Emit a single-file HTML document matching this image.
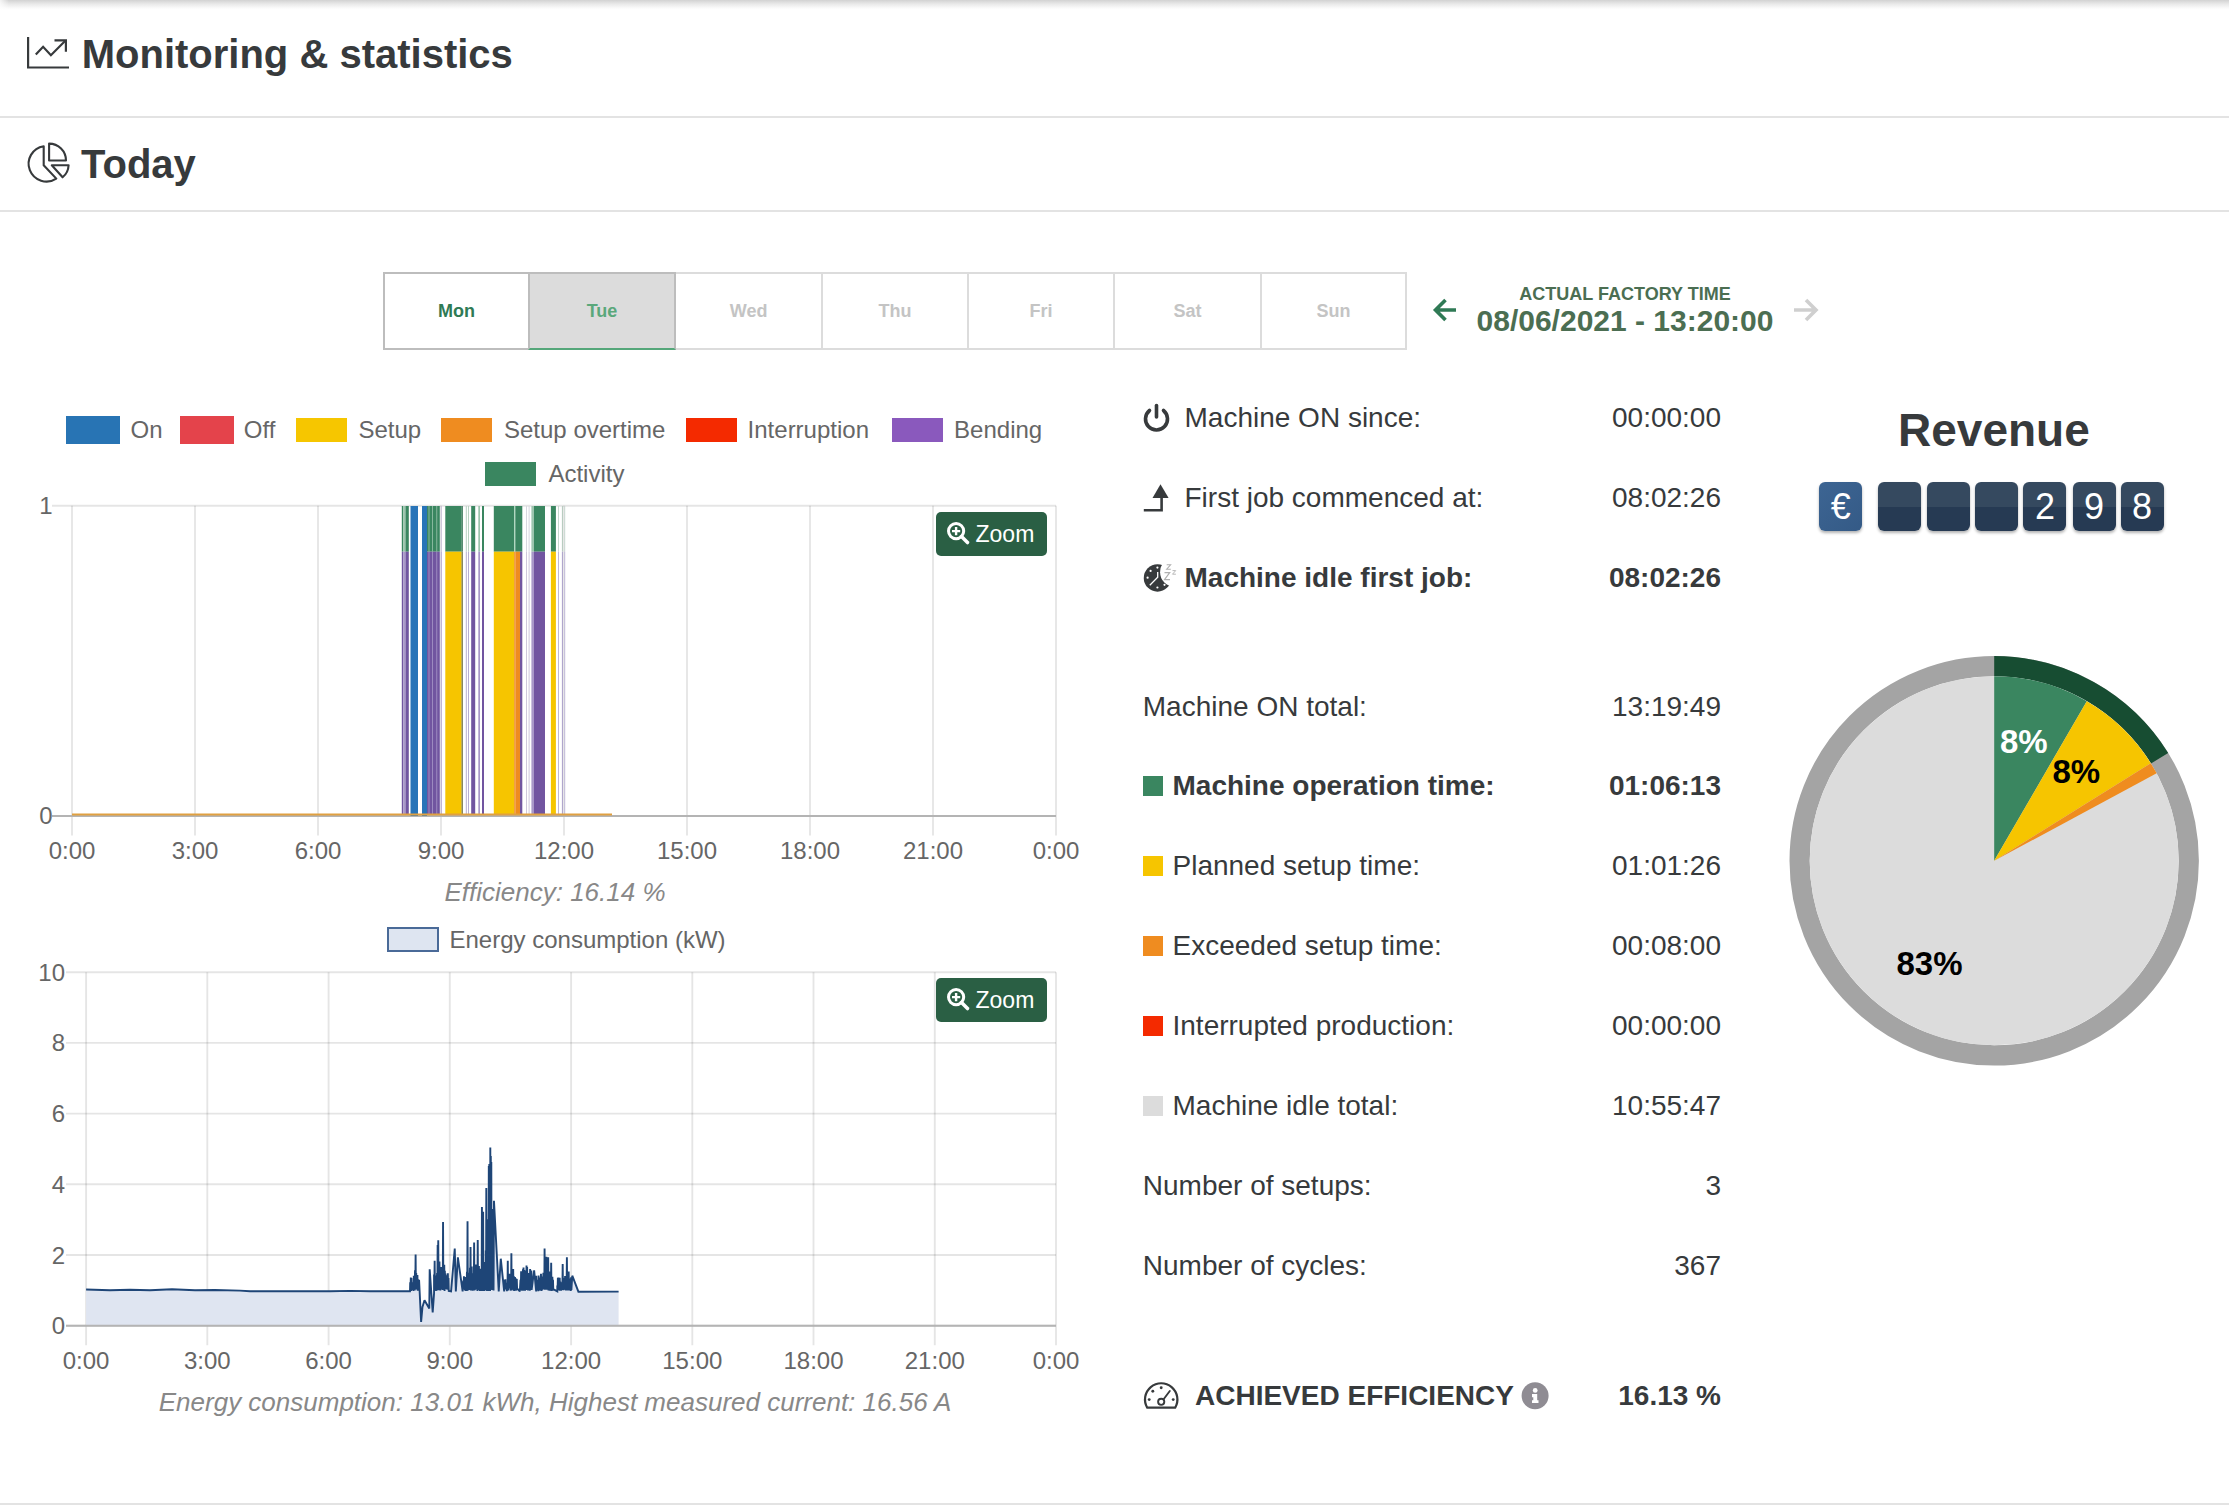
<!DOCTYPE html>
<html><head><meta charset="utf-8">
<style>
html,body{margin:0;padding:0;background:#fff;}
body{width:2229px;height:1505px;position:relative;overflow:hidden;font-family:"Liberation Sans",sans-serif;color:#373a3c;}
.t{position:absolute;line-height:1;white-space:nowrap;}
.b{font-weight:bold;}
.shadow{position:absolute;left:0;top:0;width:2229px;height:10px;background:linear-gradient(to right,rgba(255,255,255,.75),rgba(255,255,255,0) 9px),linear-gradient(#d2d2d2,#e9e9e9 40%,#fafafa 80%,#fff);}
.hr{position:absolute;left:0;width:2229px;height:2px;background:#e3e3e3;}
.tab{position:absolute;top:272px;height:77.5px;box-sizing:border-box;border:2px solid #dcdcdc;font-weight:bold;font-size:18px;text-align:center;line-height:74px;color:#c4c4c4;}
.sq{position:absolute;width:20px;height:20px;}
.digit{position:absolute;top:482px;width:43px;height:49px;border-radius:6px;background:linear-gradient(#35495f 0,#35495f 51%,#263a53 51%,#263a53 100%);box-shadow:0 2px 3px rgba(0,0,0,.3);color:#fff;font-size:36px;text-align:center;line-height:50px;}
.zoom{position:absolute;left:936px;width:111px;height:44px;border-radius:5px;background:#2a5f44;}
svg{position:absolute;left:0;top:0;overflow:visible;}
</style></head>
<body>
<div class="shadow"></div>
<svg style="left:0;top:0" width="80" height="200">
 <path d="M28.1 37 V67.5 H69" fill="none" stroke="#373a3c" stroke-width="2.2"/>
 <path d="M35.8 54.5 L43.1 46.8 L50.9 55.2 L65.3 40.8" fill="none" stroke="#373a3c" stroke-width="2.2"/>
 <path d="M54.5 40.4 H65.9 V51.8" fill="none" stroke="#373a3c" stroke-width="2.2"/>
 <path d="M43.7 146.2 A17.8 17.8 0 1 0 56.3 178.6 L43.7 165.2 Z" fill="none" stroke="#373a3c" stroke-width="2.1" stroke-linejoin="round"/>
 <path d="M49.1 143.6 A16.9 16.9 0 0 1 66 160.5 H49.1 Z" fill="none" stroke="#373a3c" stroke-width="2.1" stroke-linejoin="round"/>
 <path d="M51.8 165.2 H68.6 A16.8 16.8 0 0 1 62.6 177.3 Z" fill="none" stroke="#373a3c" stroke-width="2.1" stroke-linejoin="round"/>
</svg>
<div class="t b" style="left:81.7px;top:34.14px;font-size:40px;">Monitoring &amp; statistics</div>
<div class="hr" style="top:115.5px"></div>
<div class="t b" style="left:81.0px;top:144.14px;font-size:40px;">Today</div>
<div class="hr" style="top:209.5px"></div>
<div class="tab" style="left:383.2px;width:146.7px;border-color:#bdbdbd;color:#2f7a55;z-index:1;">Mon</div>
<div class="tab" style="left:527.9px;width:148.3px;border-color:#bdbdbd;background:#dcdcdc;color:#5aa87b;border-bottom-color:#55a77a;z-index:2;">Tue</div>
<div class="tab" style="left:674.2px;width:148.8px;">Wed</div>
<div class="tab" style="left:821.0px;width:148.0px;">Thu</div>
<div class="tab" style="left:967.0px;width:148.0px;">Fri</div>
<div class="tab" style="left:1113.0px;width:149.0px;">Sat</div>
<div class="tab" style="left:1260.0px;width:147.0px;">Sun</div>
<svg width="2229" height="400">
 <path d="M1456 310 H1437 M1445.5 300 L1435.5 310 L1445.5 320" fill="none" stroke="#2f7a55" stroke-width="3.6"/>
 <path d="M1794 310 H1814 M1806 300 L1816 310 L1806 320" fill="none" stroke="#cfcfcf" stroke-width="3.6"/>
</svg>
<div class="t b" style="left:1125.0px;width:1000px;text-align:center;top:284.56px;font-size:18px;color:#4b6e52;">ACTUAL FACTORY TIME</div>
<div class="t b" style="left:1125.0px;width:1000px;text-align:center;top:306.41px;font-size:30px;color:#4b6e52;">08/06/2021 - 13:20:00</div>
<div style="position:absolute;left:66.3px;top:415.9px;width:54.1px;height:27.8px;background:#2874b4"></div>
<div class="t " style="left:130.6px;top:417.68px;font-size:24px;color:#666;">On</div>
<div style="position:absolute;left:180.1px;top:415.9px;width:54.1px;height:27.8px;background:#e4434b"></div>
<div class="t " style="left:243.8px;top:417.68px;font-size:24px;color:#666;">Off</div>
<div style="position:absolute;left:296.3px;top:417.9px;width:50.7px;height:23.7px;background:#f6c600"></div>
<div class="t " style="left:358.4px;top:417.68px;font-size:24px;color:#666;">Setup</div>
<div style="position:absolute;left:441.4px;top:417.9px;width:50.7px;height:23.7px;background:#ef8c20"></div>
<div class="t " style="left:504.0px;top:417.68px;font-size:24px;color:#666;">Setup overtime</div>
<div style="position:absolute;left:686.3px;top:417.9px;width:50.7px;height:23.7px;background:#f42a00"></div>
<div class="t " style="left:747.6px;top:417.68px;font-size:24px;color:#666;">Interruption</div>
<div style="position:absolute;left:892.2px;top:417.9px;width:50.7px;height:23.7px;background:#8a59bd"></div>
<div class="t " style="left:954.1px;top:417.68px;font-size:24px;color:#666;">Bending</div>
<div style="position:absolute;left:485.2px;top:461.8px;width:50.8px;height:23.9px;background:#3a8660"></div>
<div class="t " style="left:548.4px;top:461.68px;font-size:24px;color:#666;">Activity</div>
<svg width="1100" height="1505"><line x1="72" y1="505.8" x2="72" y2="835.6" stroke="rgba(0,0,0,0.1)" stroke-width="1.9"/><line x1="195" y1="505.8" x2="195" y2="835.6" stroke="rgba(0,0,0,0.1)" stroke-width="1.9"/><line x1="318" y1="505.8" x2="318" y2="835.6" stroke="rgba(0,0,0,0.1)" stroke-width="1.9"/><line x1="441" y1="505.8" x2="441" y2="835.6" stroke="rgba(0,0,0,0.1)" stroke-width="1.9"/><line x1="564" y1="505.8" x2="564" y2="835.6" stroke="rgba(0,0,0,0.1)" stroke-width="1.9"/><line x1="687" y1="505.8" x2="687" y2="835.6" stroke="rgba(0,0,0,0.1)" stroke-width="1.9"/><line x1="810" y1="505.8" x2="810" y2="835.6" stroke="rgba(0,0,0,0.1)" stroke-width="1.9"/><line x1="933" y1="505.8" x2="933" y2="835.6" stroke="rgba(0,0,0,0.1)" stroke-width="1.9"/><line x1="1056" y1="505.8" x2="1056" y2="835.6" stroke="rgba(0,0,0,0.1)" stroke-width="1.9"/><line x1="52" y1="505.8" x2="1056" y2="505.8" stroke="rgba(0,0,0,0.1)" stroke-width="1.9"/><line x1="52" y1="816" x2="1056" y2="816" stroke="#b4b4b4" stroke-width="2"/><rect x="401.8" y="506" width="1.40" height="45.7" fill="#3a8660"/><rect x="401.8" y="551.7" width="1.40" height="263.3" fill="#7155a0"/><rect x="403.2" y="506" width="2.30" height="45.7" fill="#9cc4ad"/><rect x="403.2" y="551.7" width="2.30" height="263.3" fill="#a898c8"/><rect x="405.5" y="506" width="3.30" height="45.7" fill="#3a8660"/><rect x="405.5" y="551.7" width="3.30" height="263.3" fill="#7155a0"/><rect x="410.5" y="506" width="7.50" height="310" fill="#2874b8"/><rect x="422" y="506" width="5.00" height="310" fill="#2874b8"/><rect x="427" y="506" width="12.80" height="45.7" fill="#3a8660"/><rect x="427" y="551.7" width="12.80" height="263.3" fill="#7155a0"/><rect x="428.6" y="506" width="0.80" height="45.7" fill="#9cc4ad"/><rect x="428.6" y="551.7" width="0.80" height="263.3" fill="#a898c8"/><rect x="432.2" y="506" width="0.80" height="45.7" fill="#9cc4ad"/><rect x="432.2" y="551.7" width="0.80" height="263.3" fill="#a898c8"/><rect x="436.4" y="506" width="0.80" height="45.7" fill="#9cc4ad"/><rect x="436.4" y="551.7" width="0.80" height="263.3" fill="#a898c8"/><rect x="440.8" y="506" width="1.00" height="45.7" fill="#c9c0d8"/><rect x="440.8" y="551.7" width="1.00" height="263.3" fill="#b7a9cf"/><rect x="445.3" y="506" width="16.30" height="45.7" fill="#3a8660"/><rect x="445.3" y="551.7" width="16.30" height="263.3" fill="#f6c500"/><rect x="461.6" y="506" width="1.20" height="45.7" fill="#2f6f4f"/><rect x="461.6" y="551.7" width="1.20" height="263.3" fill="#6a6a3a"/><rect x="465.8" y="506" width="1.00" height="45.7" fill="#b9d2c2"/><rect x="465.8" y="551.7" width="1.00" height="263.3" fill="#b8aed0"/><rect x="468" y="506" width="1.00" height="45.7" fill="#b9d2c2"/><rect x="468" y="551.7" width="1.00" height="263.3" fill="#b8aed0"/><rect x="471.2" y="506" width="4.00" height="45.7" fill="#3a8660"/><rect x="471.2" y="551.7" width="4.00" height="263.3" fill="#7155a0"/><rect x="478.3" y="506" width="1.70" height="45.7" fill="#9cc4ad"/><rect x="478.3" y="551.7" width="1.70" height="263.3" fill="#a898c8"/><rect x="482" y="506" width="2.00" height="45.7" fill="#3a8660"/><rect x="482" y="551.7" width="2.00" height="263.3" fill="#7155a0"/><rect x="493.8" y="506" width="20.40" height="45.7" fill="#3a8660"/><rect x="493.8" y="551.7" width="20.40" height="263.3" fill="#f6c500"/><rect x="514.2" y="506" width="1.10" height="45.7" fill="#a8d4b8"/><rect x="514.2" y="551.7" width="1.10" height="263.3" fill="#ef8c1f"/><rect x="515.3" y="506" width="4.70" height="45.7" fill="#3a8660"/><rect x="515.3" y="551.7" width="4.70" height="263.3" fill="#ef8c1f"/><rect x="520" y="506" width="2.30" height="45.7" fill="#3a8660"/><rect x="520" y="551.7" width="2.30" height="263.3" fill="#7155a0"/><rect x="526" y="506" width="1.00" height="45.7" fill="#d8d8e0"/><rect x="526" y="551.7" width="1.00" height="263.3" fill="#d0c8dc"/><rect x="528.6" y="506" width="1.00" height="45.7" fill="#d8d8e0"/><rect x="528.6" y="551.7" width="1.00" height="263.3" fill="#d0c8dc"/><rect x="531.4" y="506" width="2.60" height="45.7" fill="#9cc4ad"/><rect x="531.4" y="551.7" width="2.60" height="263.3" fill="#a898c8"/><rect x="534" y="506" width="11.00" height="45.7" fill="#3a8660"/><rect x="534" y="551.7" width="11.00" height="263.3" fill="#7155a0"/><rect x="550.9" y="506" width="5.00" height="45.7" fill="#3a8660"/><rect x="550.9" y="551.7" width="5.00" height="263.3" fill="#f6c500"/><rect x="558" y="506" width="1.00" height="45.7" fill="#c8d8cf"/><rect x="558" y="551.7" width="1.00" height="263.3" fill="#c0b8d8"/><rect x="561.9" y="506" width="1.10" height="45.7" fill="#b8ccc0"/><rect x="561.9" y="551.7" width="1.10" height="263.3" fill="#b0a6cc"/><rect x="564.2" y="506" width="1.00" height="45.7" fill="#c8d8cf"/><rect x="564.2" y="551.7" width="1.00" height="263.3" fill="#c0b8d8"/><line x1="72" y1="814.5" x2="612" y2="814.5" stroke="#e0a040" stroke-width="2.2"/><text x="52.5" y="513.6" font-size="24" fill="#666" text-anchor="end">1</text><text x="52.5" y="824" font-size="24" fill="#666" text-anchor="end">0</text><text x="72" y="859" font-size="24" fill="#666" text-anchor="middle">0:00</text><text x="195" y="859" font-size="24" fill="#666" text-anchor="middle">3:00</text><text x="318" y="859" font-size="24" fill="#666" text-anchor="middle">6:00</text><text x="441" y="859" font-size="24" fill="#666" text-anchor="middle">9:00</text><text x="564" y="859" font-size="24" fill="#666" text-anchor="middle">12:00</text><text x="687" y="859" font-size="24" fill="#666" text-anchor="middle">15:00</text><text x="810" y="859" font-size="24" fill="#666" text-anchor="middle">18:00</text><text x="933" y="859" font-size="24" fill="#666" text-anchor="middle">21:00</text><text x="1056" y="859" font-size="24" fill="#666" text-anchor="middle">0:00</text></svg>
<div class="t " style="left:55.0px;width:1000px;text-align:center;top:878.99px;font-size:26px;color:#888;font-style:italic;">Efficiency: 16.14 %</div>
<div style="position:absolute;left:387.1px;top:927px;width:51.8px;height:25.4px;box-sizing:border-box;border:2px solid #4a6a98;background:#dee5f1"></div>
<div class="t " style="left:449.5px;top:927.68px;font-size:24px;color:#666;">Energy consumption (kW)</div>
<svg width="1100" height="1505"><line x1="86.1" y1="972.2" x2="86.1" y2="1345.3" stroke="rgba(0,0,0,0.1)" stroke-width="1.9"/><line x1="207.3" y1="972.2" x2="207.3" y2="1345.3" stroke="rgba(0,0,0,0.1)" stroke-width="1.9"/><line x1="328.6" y1="972.2" x2="328.6" y2="1345.3" stroke="rgba(0,0,0,0.1)" stroke-width="1.9"/><line x1="449.8" y1="972.2" x2="449.8" y2="1345.3" stroke="rgba(0,0,0,0.1)" stroke-width="1.9"/><line x1="571.1" y1="972.2" x2="571.1" y2="1345.3" stroke="rgba(0,0,0,0.1)" stroke-width="1.9"/><line x1="692.3" y1="972.2" x2="692.3" y2="1345.3" stroke="rgba(0,0,0,0.1)" stroke-width="1.9"/><line x1="813.5" y1="972.2" x2="813.5" y2="1345.3" stroke="rgba(0,0,0,0.1)" stroke-width="1.9"/><line x1="934.8" y1="972.2" x2="934.8" y2="1345.3" stroke="rgba(0,0,0,0.1)" stroke-width="1.9"/><line x1="1056.0" y1="972.2" x2="1056.0" y2="1345.3" stroke="rgba(0,0,0,0.1)" stroke-width="1.9"/><line x1="66" y1="972.2" x2="1056" y2="972.2" stroke="rgba(0,0,0,0.1)" stroke-width="1.9"/><line x1="66" y1="1042.9" x2="1056" y2="1042.9" stroke="rgba(0,0,0,0.1)" stroke-width="1.9"/><line x1="66" y1="1113.6" x2="1056" y2="1113.6" stroke="rgba(0,0,0,0.1)" stroke-width="1.9"/><line x1="66" y1="1184.3" x2="1056" y2="1184.3" stroke="rgba(0,0,0,0.1)" stroke-width="1.9"/><line x1="66" y1="1255.0" x2="1056" y2="1255.0" stroke="rgba(0,0,0,0.1)" stroke-width="1.9"/><line x1="66" y1="1325.7" x2="1056" y2="1325.7" stroke="rgba(0,0,0,0.1)" stroke-width="1.9"/><path d="M86.10 1289.5 L110.00 1290.3 L130.00 1289.8 L150.00 1290.2 L172.00 1289.2 L195.00 1290.3 L215.00 1290.0 L240.00 1290.6 L250.00 1291.3 L330.00 1291.3 L350.00 1290.9 L370.00 1291.2 L410.00 1291.3 L410.21 1282.3 L410.51 1290.7 L410.81 1277.6 L411.11 1291.0 L411.41 1277.9 L411.71 1290.1 L412.01 1283.5 L412.31 1289.7 L412.61 1283.3 L412.91 1289.9 L413.21 1282.2 L413.51 1290.9 L413.81 1275.7 L414.11 1288.7 L414.41 1280.2 L414.71 1290.5 L415.01 1270.3 L415.31 1288.4 L415.61 1254.6 L415.91 1289.5 L416.21 1273.1 L416.51 1288.3 L416.81 1279.7 L417.11 1288.6 L417.41 1275.0 L417.71 1290.8 L418.01 1279.3 L418.31 1290.3 L419.07 1279.8 L421.11 1322.0 L422.47 1307.0 L424.51 1300.2 L429.28 1308.4 L429.69 1269.2 L432.68 1312.5 L434.05 1293.4 L434.05 1274.4 L434.35 1290.7 L434.65 1260.7 L434.95 1289.5 L435.25 1275.5 L435.55 1290.1 L435.85 1276.2 L436.15 1291.0 L436.45 1282.9 L436.75 1290.6 L437.05 1273.1 L437.35 1289.9 L437.65 1245.1 L437.95 1290.3 L438.25 1240.3 L438.55 1289.4 L438.85 1275.0 L439.15 1290.3 L439.45 1261.4 L439.75 1288.8 L440.05 1270.2 L440.35 1290.5 L440.65 1272.4 L440.95 1289.6 L441.25 1267.1 L441.55 1289.0 L441.85 1277.4 L442.15 1288.3 L442.45 1280.4 L442.75 1289.9 L443.05 1221.9 L443.35 1288.9 L443.65 1279.8 L443.95 1289.7 L444.25 1264.8 L444.55 1291.1 L444.85 1270.7 L445.15 1288.9 L445.45 1273.4 L445.75 1288.6 L446.05 1278.5 L446.35 1289.1 L446.65 1275.3 L446.95 1289.5 L447.25 1278.3 L447.55 1288.7 L447.85 1273.2 L448.15 1289.8 L448.45 1278.0 L448.75 1291.0 L451.07 1291.4 L454.75 1248.5 L455.84 1291.4 L457.88 1257.3 L462.64 1291.4 L463.33 1280.5 L463.63 1289.3 L463.93 1276.3 L464.23 1288.7 L464.53 1282.5 L464.83 1290.0 L465.13 1277.0 L465.43 1291.1 L465.73 1278.5 L466.03 1290.7 L466.33 1282.4 L466.63 1291.0 L466.93 1271.7 L467.23 1290.8 L467.53 1221.2 L467.83 1290.5 L468.13 1275.6 L468.43 1288.6 L468.73 1281.0 L469.03 1289.9 L469.33 1272.7 L469.63 1288.5 L469.93 1267.8 L470.23 1288.6 L470.53 1247.1 L470.83 1290.4 L471.13 1274.8 L471.43 1290.1 L471.73 1266.4 L472.03 1288.3 L472.33 1279.5 L472.63 1290.7 L472.93 1278.0 L473.23 1290.5 L473.53 1273.3 L473.83 1289.4 L474.13 1242.4 L474.43 1290.4 L474.73 1282.0 L475.03 1289.9 L475.33 1275.2 L475.63 1289.5 L475.93 1264.4 L476.23 1289.1 L476.53 1272.4 L476.83 1289.3 L477.13 1269.1 L477.43 1291.0 L477.73 1240.0 L478.03 1288.5 L478.33 1266.6 L478.63 1288.6 L478.93 1266.0 L479.23 1290.0 L479.53 1273.6 L479.83 1290.9 L480.13 1268.7 L480.43 1291.0 L480.73 1279.8 L481.03 1290.6 L481.33 1277.8 L481.63 1290.2 L481.93 1206.9 L482.23 1291.0 L482.53 1280.9 L482.83 1290.7 L483.13 1211.7 L483.43 1290.9 L483.73 1273.0 L484.03 1291.1 L484.33 1261.9 L484.63 1289.4 L484.93 1276.0 L485.23 1290.4 L485.53 1269.2 L485.83 1290.1 L485.80 1250.6 L486.05 1288.7 L486.30 1188.0 L486.55 1289.8 L486.80 1219.3 L487.05 1290.9 L487.30 1244.8 L487.55 1290.2 L487.80 1229.2 L488.05 1288.7 L488.30 1235.8 L488.55 1291.1 L488.80 1166.1 L489.05 1289.6 L489.30 1164.0 L489.55 1290.8 L489.80 1196.0 L490.05 1291.1 L490.30 1147.4 L490.55 1289.6 L490.80 1156.0 L491.05 1288.6 L491.30 1162.0 L491.55 1289.1 L491.80 1225.2 L492.05 1290.1 L492.30 1235.6 L492.55 1288.9 L492.80 1209.0 L493.05 1288.9 L493.30 1228.3 L493.55 1290.5 L493.97 1200.8 L498.73 1291.4 L500.78 1258.7 L504.18 1291.4 L504.18 1280.7 L504.48 1288.2 L504.78 1279.8 L505.08 1288.8 L505.38 1279.4 L505.68 1289.0 L505.98 1284.4 L506.28 1289.6 L506.58 1282.7 L506.88 1291.1 L507.18 1285.7 L507.48 1290.4 L507.78 1260.7 L508.08 1290.4 L508.38 1277.7 L508.68 1288.3 L508.98 1280.0 L509.28 1288.4 L509.58 1273.7 L509.88 1288.3 L510.18 1281.0 L510.48 1290.5 L510.78 1282.6 L511.08 1290.6 L511.38 1253.2 L511.68 1290.6 L511.98 1277.9 L512.28 1288.5 L512.58 1275.4 L512.88 1289.8 L513.18 1268.9 L513.48 1289.2 L513.78 1275.9 L514.08 1290.9 L514.38 1277.5 L514.68 1288.5 L514.98 1276.9 L515.28 1288.9 L515.58 1280.9 L515.88 1290.7 L516.18 1278.4 L516.48 1290.2 L516.78 1279.1 L517.08 1288.3 L519.84 1291.4 L520.52 1279.8 L520.82 1290.0 L521.12 1271.3 L521.42 1289.0 L521.72 1281.3 L522.02 1290.8 L522.32 1280.9 L522.62 1288.5 L522.92 1269.3 L523.22 1290.8 L523.52 1267.6 L523.82 1288.3 L524.12 1269.9 L524.42 1290.1 L524.72 1272.0 L525.02 1290.8 L525.32 1281.9 L525.62 1288.3 L525.92 1270.5 L526.22 1289.6 L526.52 1265.6 L526.82 1289.9 L527.12 1266.9 L527.42 1288.7 L527.72 1278.7 L528.02 1290.4 L528.32 1277.5 L528.62 1290.5 L528.92 1273.0 L529.22 1290.4 L529.52 1276.3 L529.82 1290.8 L530.12 1269.0 L530.42 1290.1 L530.72 1276.6 L531.02 1289.4 L531.32 1270.5 L531.62 1289.9 L534.14 1270.3 L536.18 1291.4 L536.18 1275.8 L536.48 1289.7 L536.78 1279.7 L537.08 1289.6 L537.38 1285.2 L537.68 1289.9 L537.98 1283.1 L538.28 1291.2 L538.58 1275.4 L538.88 1290.7 L539.18 1279.0 L539.48 1289.0 L539.78 1277.6 L540.08 1290.2 L540.38 1277.8 L540.68 1289.5 L540.98 1273.8 L541.28 1290.9 L541.58 1276.5 L541.88 1290.5 L542.18 1280.2 L542.48 1288.9 L542.78 1276.6 L543.08 1289.5 L543.38 1272.7 L543.68 1288.5 L543.98 1277.4 L544.28 1289.4 L544.58 1248.5 L544.88 1289.7 L545.18 1276.4 L545.48 1289.1 L545.78 1277.2 L546.08 1289.6 L546.38 1256.7 L546.68 1289.8 L546.98 1270.1 L547.28 1289.1 L547.58 1271.0 L547.88 1288.4 L548.18 1257.3 L548.48 1290.4 L548.78 1275.7 L549.08 1288.4 L549.38 1271.6 L549.68 1290.8 L549.98 1282.3 L550.28 1289.9 L550.58 1283.6 L550.88 1290.5 L551.18 1262.8 L551.48 1291.0 L551.78 1278.0 L552.08 1288.8 L552.38 1276.8 L552.68 1290.7 L552.98 1279.9 L553.28 1289.2 L557.29 1291.4 L557.29 1285.5 L557.59 1288.6 L557.89 1277.7 L558.19 1290.5 L558.49 1277.4 L558.79 1290.0 L559.09 1281.6 L559.39 1288.2 L559.69 1277.8 L559.99 1290.7 L560.29 1281.6 L560.59 1289.7 L560.89 1282.3 L561.19 1290.6 L561.49 1282.3 L561.79 1289.0 L562.09 1285.4 L562.39 1289.5 L562.69 1264.1 L562.99 1289.9 L563.29 1285.1 L563.59 1290.2 L563.89 1277.9 L564.19 1289.7 L564.49 1284.5 L564.79 1288.2 L565.09 1276.0 L565.39 1288.3 L565.69 1284.1 L565.99 1290.4 L566.29 1284.8 L566.59 1288.9 L566.89 1257.3 L567.19 1290.4 L567.49 1283.8 L567.79 1289.9 L568.09 1274.6 L568.39 1288.7 L568.69 1271.6 L568.99 1290.4 L569.29 1283.5 L569.59 1288.4 L569.89 1278.6 L570.19 1289.1 L570.49 1284.2 L570.79 1291.0 L571.09 1277.2 L571.39 1289.9 L572.27 1275.7 L578.40 1291.7 L618.60 1291.6 L618.6 1325.7 L86.1 1325.7 Z" fill="#dfe5f1" stroke="none"/><path d="M86.10 1289.5 L110.00 1290.3 L130.00 1289.8 L150.00 1290.2 L172.00 1289.2 L195.00 1290.3 L215.00 1290.0 L240.00 1290.6 L250.00 1291.3 L330.00 1291.3 L350.00 1290.9 L370.00 1291.2 L410.00 1291.3 L410.21 1282.3 L410.51 1290.7 L410.81 1277.6 L411.11 1291.0 L411.41 1277.9 L411.71 1290.1 L412.01 1283.5 L412.31 1289.7 L412.61 1283.3 L412.91 1289.9 L413.21 1282.2 L413.51 1290.9 L413.81 1275.7 L414.11 1288.7 L414.41 1280.2 L414.71 1290.5 L415.01 1270.3 L415.31 1288.4 L415.61 1254.6 L415.91 1289.5 L416.21 1273.1 L416.51 1288.3 L416.81 1279.7 L417.11 1288.6 L417.41 1275.0 L417.71 1290.8 L418.01 1279.3 L418.31 1290.3 L419.07 1279.8 L421.11 1322.0 L422.47 1307.0 L424.51 1300.2 L429.28 1308.4 L429.69 1269.2 L432.68 1312.5 L434.05 1293.4 L434.05 1274.4 L434.35 1290.7 L434.65 1260.7 L434.95 1289.5 L435.25 1275.5 L435.55 1290.1 L435.85 1276.2 L436.15 1291.0 L436.45 1282.9 L436.75 1290.6 L437.05 1273.1 L437.35 1289.9 L437.65 1245.1 L437.95 1290.3 L438.25 1240.3 L438.55 1289.4 L438.85 1275.0 L439.15 1290.3 L439.45 1261.4 L439.75 1288.8 L440.05 1270.2 L440.35 1290.5 L440.65 1272.4 L440.95 1289.6 L441.25 1267.1 L441.55 1289.0 L441.85 1277.4 L442.15 1288.3 L442.45 1280.4 L442.75 1289.9 L443.05 1221.9 L443.35 1288.9 L443.65 1279.8 L443.95 1289.7 L444.25 1264.8 L444.55 1291.1 L444.85 1270.7 L445.15 1288.9 L445.45 1273.4 L445.75 1288.6 L446.05 1278.5 L446.35 1289.1 L446.65 1275.3 L446.95 1289.5 L447.25 1278.3 L447.55 1288.7 L447.85 1273.2 L448.15 1289.8 L448.45 1278.0 L448.75 1291.0 L451.07 1291.4 L454.75 1248.5 L455.84 1291.4 L457.88 1257.3 L462.64 1291.4 L463.33 1280.5 L463.63 1289.3 L463.93 1276.3 L464.23 1288.7 L464.53 1282.5 L464.83 1290.0 L465.13 1277.0 L465.43 1291.1 L465.73 1278.5 L466.03 1290.7 L466.33 1282.4 L466.63 1291.0 L466.93 1271.7 L467.23 1290.8 L467.53 1221.2 L467.83 1290.5 L468.13 1275.6 L468.43 1288.6 L468.73 1281.0 L469.03 1289.9 L469.33 1272.7 L469.63 1288.5 L469.93 1267.8 L470.23 1288.6 L470.53 1247.1 L470.83 1290.4 L471.13 1274.8 L471.43 1290.1 L471.73 1266.4 L472.03 1288.3 L472.33 1279.5 L472.63 1290.7 L472.93 1278.0 L473.23 1290.5 L473.53 1273.3 L473.83 1289.4 L474.13 1242.4 L474.43 1290.4 L474.73 1282.0 L475.03 1289.9 L475.33 1275.2 L475.63 1289.5 L475.93 1264.4 L476.23 1289.1 L476.53 1272.4 L476.83 1289.3 L477.13 1269.1 L477.43 1291.0 L477.73 1240.0 L478.03 1288.5 L478.33 1266.6 L478.63 1288.6 L478.93 1266.0 L479.23 1290.0 L479.53 1273.6 L479.83 1290.9 L480.13 1268.7 L480.43 1291.0 L480.73 1279.8 L481.03 1290.6 L481.33 1277.8 L481.63 1290.2 L481.93 1206.9 L482.23 1291.0 L482.53 1280.9 L482.83 1290.7 L483.13 1211.7 L483.43 1290.9 L483.73 1273.0 L484.03 1291.1 L484.33 1261.9 L484.63 1289.4 L484.93 1276.0 L485.23 1290.4 L485.53 1269.2 L485.83 1290.1 L485.80 1250.6 L486.05 1288.7 L486.30 1188.0 L486.55 1289.8 L486.80 1219.3 L487.05 1290.9 L487.30 1244.8 L487.55 1290.2 L487.80 1229.2 L488.05 1288.7 L488.30 1235.8 L488.55 1291.1 L488.80 1166.1 L489.05 1289.6 L489.30 1164.0 L489.55 1290.8 L489.80 1196.0 L490.05 1291.1 L490.30 1147.4 L490.55 1289.6 L490.80 1156.0 L491.05 1288.6 L491.30 1162.0 L491.55 1289.1 L491.80 1225.2 L492.05 1290.1 L492.30 1235.6 L492.55 1288.9 L492.80 1209.0 L493.05 1288.9 L493.30 1228.3 L493.55 1290.5 L493.97 1200.8 L498.73 1291.4 L500.78 1258.7 L504.18 1291.4 L504.18 1280.7 L504.48 1288.2 L504.78 1279.8 L505.08 1288.8 L505.38 1279.4 L505.68 1289.0 L505.98 1284.4 L506.28 1289.6 L506.58 1282.7 L506.88 1291.1 L507.18 1285.7 L507.48 1290.4 L507.78 1260.7 L508.08 1290.4 L508.38 1277.7 L508.68 1288.3 L508.98 1280.0 L509.28 1288.4 L509.58 1273.7 L509.88 1288.3 L510.18 1281.0 L510.48 1290.5 L510.78 1282.6 L511.08 1290.6 L511.38 1253.2 L511.68 1290.6 L511.98 1277.9 L512.28 1288.5 L512.58 1275.4 L512.88 1289.8 L513.18 1268.9 L513.48 1289.2 L513.78 1275.9 L514.08 1290.9 L514.38 1277.5 L514.68 1288.5 L514.98 1276.9 L515.28 1288.9 L515.58 1280.9 L515.88 1290.7 L516.18 1278.4 L516.48 1290.2 L516.78 1279.1 L517.08 1288.3 L519.84 1291.4 L520.52 1279.8 L520.82 1290.0 L521.12 1271.3 L521.42 1289.0 L521.72 1281.3 L522.02 1290.8 L522.32 1280.9 L522.62 1288.5 L522.92 1269.3 L523.22 1290.8 L523.52 1267.6 L523.82 1288.3 L524.12 1269.9 L524.42 1290.1 L524.72 1272.0 L525.02 1290.8 L525.32 1281.9 L525.62 1288.3 L525.92 1270.5 L526.22 1289.6 L526.52 1265.6 L526.82 1289.9 L527.12 1266.9 L527.42 1288.7 L527.72 1278.7 L528.02 1290.4 L528.32 1277.5 L528.62 1290.5 L528.92 1273.0 L529.22 1290.4 L529.52 1276.3 L529.82 1290.8 L530.12 1269.0 L530.42 1290.1 L530.72 1276.6 L531.02 1289.4 L531.32 1270.5 L531.62 1289.9 L534.14 1270.3 L536.18 1291.4 L536.18 1275.8 L536.48 1289.7 L536.78 1279.7 L537.08 1289.6 L537.38 1285.2 L537.68 1289.9 L537.98 1283.1 L538.28 1291.2 L538.58 1275.4 L538.88 1290.7 L539.18 1279.0 L539.48 1289.0 L539.78 1277.6 L540.08 1290.2 L540.38 1277.8 L540.68 1289.5 L540.98 1273.8 L541.28 1290.9 L541.58 1276.5 L541.88 1290.5 L542.18 1280.2 L542.48 1288.9 L542.78 1276.6 L543.08 1289.5 L543.38 1272.7 L543.68 1288.5 L543.98 1277.4 L544.28 1289.4 L544.58 1248.5 L544.88 1289.7 L545.18 1276.4 L545.48 1289.1 L545.78 1277.2 L546.08 1289.6 L546.38 1256.7 L546.68 1289.8 L546.98 1270.1 L547.28 1289.1 L547.58 1271.0 L547.88 1288.4 L548.18 1257.3 L548.48 1290.4 L548.78 1275.7 L549.08 1288.4 L549.38 1271.6 L549.68 1290.8 L549.98 1282.3 L550.28 1289.9 L550.58 1283.6 L550.88 1290.5 L551.18 1262.8 L551.48 1291.0 L551.78 1278.0 L552.08 1288.8 L552.38 1276.8 L552.68 1290.7 L552.98 1279.9 L553.28 1289.2 L557.29 1291.4 L557.29 1285.5 L557.59 1288.6 L557.89 1277.7 L558.19 1290.5 L558.49 1277.4 L558.79 1290.0 L559.09 1281.6 L559.39 1288.2 L559.69 1277.8 L559.99 1290.7 L560.29 1281.6 L560.59 1289.7 L560.89 1282.3 L561.19 1290.6 L561.49 1282.3 L561.79 1289.0 L562.09 1285.4 L562.39 1289.5 L562.69 1264.1 L562.99 1289.9 L563.29 1285.1 L563.59 1290.2 L563.89 1277.9 L564.19 1289.7 L564.49 1284.5 L564.79 1288.2 L565.09 1276.0 L565.39 1288.3 L565.69 1284.1 L565.99 1290.4 L566.29 1284.8 L566.59 1288.9 L566.89 1257.3 L567.19 1290.4 L567.49 1283.8 L567.79 1289.9 L568.09 1274.6 L568.39 1288.7 L568.69 1271.6 L568.99 1290.4 L569.29 1283.5 L569.59 1288.4 L569.89 1278.6 L570.19 1289.1 L570.49 1284.2 L570.79 1291.0 L571.09 1277.2 L571.39 1289.9 L572.27 1275.7 L578.40 1291.7 L618.60 1291.6" fill="none" stroke="#1e4577" stroke-width="1.9" stroke-linejoin="miter" stroke-miterlimit="2"/><line x1="66" y1="1325.7" x2="1056" y2="1325.7" stroke="#b4b4b4" stroke-width="2"/><text x="65" y="980.7" font-size="24" fill="#666" text-anchor="end">10</text><text x="65" y="1051.4" font-size="24" fill="#666" text-anchor="end">8</text><text x="65" y="1122.1" font-size="24" fill="#666" text-anchor="end">6</text><text x="65" y="1192.8" font-size="24" fill="#666" text-anchor="end">4</text><text x="65" y="1263.5" font-size="24" fill="#666" text-anchor="end">2</text><text x="65" y="1334.2" font-size="24" fill="#666" text-anchor="end">0</text><text x="86.1" y="1368.6" font-size="24" fill="#666" text-anchor="middle">0:00</text><text x="207.3" y="1368.6" font-size="24" fill="#666" text-anchor="middle">3:00</text><text x="328.6" y="1368.6" font-size="24" fill="#666" text-anchor="middle">6:00</text><text x="449.8" y="1368.6" font-size="24" fill="#666" text-anchor="middle">9:00</text><text x="571.1" y="1368.6" font-size="24" fill="#666" text-anchor="middle">12:00</text><text x="692.3" y="1368.6" font-size="24" fill="#666" text-anchor="middle">15:00</text><text x="813.5" y="1368.6" font-size="24" fill="#666" text-anchor="middle">18:00</text><text x="934.8" y="1368.6" font-size="24" fill="#666" text-anchor="middle">21:00</text><text x="1056.0" y="1368.6" font-size="24" fill="#666" text-anchor="middle">0:00</text></svg>
<div class="t " style="left:55.0px;width:1000px;text-align:center;top:1388.69px;font-size:26px;color:#888;font-style:italic;">Energy consumption: 13.01 kWh, Highest measured current: 16.56 A</div>
<div class="zoom" style="top:512px"></div>
<svg width="1100" height="1505"><g transform="translate(0,0)">
<circle cx="956.1" cy="531.1" r="7.6" fill="none" stroke="#fff" stroke-width="3"/>
<path d="M956.1 527 V535.2 M952 531.1 H960.2" stroke="#fff" stroke-width="2.4"/>
<path d="M961.5 536.5 L967.5 542.5" stroke="#fff" stroke-width="3.6" stroke-linecap="round"/>
</g></svg>
<div class="t " style="left:975.5px;top:523.03px;font-size:23px;color:#fff;">Zoom</div>
<div class="zoom" style="top:978px"></div>
<svg width="1100" height="1505"><g transform="translate(0,466)">
<circle cx="956.1" cy="531.1" r="7.6" fill="none" stroke="#fff" stroke-width="3"/>
<path d="M956.1 527 V535.2 M952 531.1 H960.2" stroke="#fff" stroke-width="2.4"/>
<path d="M961.5 536.5 L967.5 542.5" stroke="#fff" stroke-width="3.6" stroke-linecap="round"/>
</g></svg>
<div class="t " style="left:975.5px;top:989.03px;font-size:23px;color:#fff;">Zoom</div>
<div class="t " style="left:1184.5px;top:404.30px;font-size:28px;">Machine ON since:</div>
<div class="t " style="right:508.0px;top:404.30px;font-size:28px;">00:00:00</div>
<div class="t " style="left:1184.5px;top:484.10px;font-size:28px;">First job commenced at:</div>
<div class="t " style="right:508.0px;top:484.10px;font-size:28px;">08:02:26</div>
<div class="t b" style="left:1184.5px;top:563.60px;font-size:28px;">Machine idle first job:</div>
<div class="t b" style="right:508.0px;top:563.60px;font-size:28px;">08:02:26</div>
<div class="t " style="left:1142.8px;top:692.80px;font-size:28px;">Machine ON total:</div>
<div class="t " style="right:508.0px;top:692.80px;font-size:28px;">13:19:49</div>
<div class="sq" style="left:1143px;top:775.9px;background:#3a8660"></div>
<div class="t b" style="left:1172.5px;top:771.70px;font-size:28px;">Machine operation time:</div>
<div class="t b" style="right:508.0px;top:771.70px;font-size:28px;">01:06:13</div>
<div class="sq" style="left:1143px;top:856.0px;background:#f6c500"></div>
<div class="t " style="left:1172.5px;top:851.80px;font-size:28px;">Planned setup time:</div>
<div class="t " style="right:508.0px;top:851.80px;font-size:28px;">01:01:26</div>
<div class="sq" style="left:1143px;top:936.0px;background:#ef8c20"></div>
<div class="t " style="left:1172.5px;top:931.80px;font-size:28px;">Exceeded setup time:</div>
<div class="t " style="right:508.0px;top:931.80px;font-size:28px;">00:08:00</div>
<div class="sq" style="left:1143px;top:1016.2px;background:#f42a00"></div>
<div class="t " style="left:1172.5px;top:1012.00px;font-size:28px;">Interrupted production:</div>
<div class="t " style="right:508.0px;top:1012.00px;font-size:28px;">00:00:00</div>
<div class="sq" style="left:1143px;top:1095.9px;background:#dcdcdc"></div>
<div class="t " style="left:1172.5px;top:1091.70px;font-size:28px;">Machine idle total:</div>
<div class="t " style="right:508.0px;top:1091.70px;font-size:28px;">10:55:47</div>
<div class="t " style="left:1142.8px;top:1172.30px;font-size:28px;">Number of setups:</div>
<div class="t " style="right:508.0px;top:1172.30px;font-size:28px;">3</div>
<div class="t " style="left:1142.8px;top:1252.40px;font-size:28px;">Number of cycles:</div>
<div class="t " style="right:508.0px;top:1252.40px;font-size:28px;">367</div>
<div class="t b" style="left:1195.0px;top:1381.80px;font-size:28px;">ACHIEVED EFFICIENCY</div>
<div class="t b" style="right:508.0px;top:1381.80px;font-size:28px;">16.13 %</div>
<svg width="2229" height="1505">
 <path d="M1149.5 410.5 A11 11 0 1 0 1163.5 410.5" fill="none" stroke="#373a3c" stroke-width="3.6" stroke-linecap="round"/>
 <path d="M1156.5 405.5 V417" stroke="#373a3c" stroke-width="3.6" stroke-linecap="round"/>
 <path d="M1143.8 510.3 H1161.6 V497" fill="none" stroke="#373a3c" stroke-width="2.6"/>
 <path d="M1152.5 498 L1160.5 484.3 L1168.6 498 Z" fill="#373a3c"/>
 <defs><mask id="bite"><rect x="1130" y="550" width="60" height="60" fill="#fff"/><circle cx="1174.8" cy="572.2" r="14.7" fill="#000"/></mask></defs>
 <circle cx="1157.5" cy="577.9" r="13.75" fill="#373a3c" mask="url(#bite)"/>
 <path d="M1157.7 572.1 V577.2 L1149.8 585.3" fill="none" stroke="#fff" stroke-width="1.3"/>
 <circle cx="1157.4" cy="567.6" r="1.1" fill="#fff"/><circle cx="1150.6" cy="570.9" r="1.1" fill="#fff"/><circle cx="1147.6" cy="577.7" r="1.1" fill="#fff"/><circle cx="1157.4" cy="587.5" r="1.1" fill="#fff"/><circle cx="1164.5" cy="584.8" r="1.1" fill="#fff"/>
 <path d="M1166.7 564.8 H1170.6 L1166.7 569.2 H1170.8" fill="none" stroke="#b0b0b0" stroke-width="1.1"/>
 <path d="M1164.5 572.6 H1169.7 L1164.5 579.7 H1170" fill="none" stroke="#b0b0b0" stroke-width="1.2"/>
 <path d="M1172.5 570.6 H1175.7 L1172.5 574.2 H1175.9" fill="none" stroke="#b8b8b8" stroke-width="1"/>
 <path d="M1147.2 1407.6 A16.2 16.2 0 1 1 1175.2 1407.6 Z" fill="none" stroke="#373a3c" stroke-width="2.2" stroke-linejoin="round"/>
 <circle cx="1161.2" cy="1401.8" r="3.1" fill="none" stroke="#373a3c" stroke-width="1.9"/>
 <path d="M1163.6 1399.3 L1169.8 1391" stroke="#373a3c" stroke-width="1.9" stroke-linecap="round"/>
 <circle cx="1149.2" cy="1399.6" r="1.45" fill="#373a3c"/><circle cx="1152.8" cy="1391.2" r="1.45" fill="#373a3c"/><circle cx="1161.2" cy="1387.8" r="1.45" fill="#373a3c"/><circle cx="1173.2" cy="1399.6" r="1.45" fill="#373a3c"/>
 <circle cx="1535.1" cy="1395.7" r="13.5" fill="#8f8c93"/>
 <circle cx="1535.2" cy="1390.4" r="2.4" fill="#fff"/>
 <path d="M1532 1394.1 H1537.2 V1400.2 H1538.5 V1402.9 H1532 V1400.2 H1533.3 V1397.2 H1532 Z" fill="#fff"/>
</svg>
<div class="t b" style="left:1898.0px;top:407.06px;font-size:46px;">Revenue</div>
<div class="digit" style="left:1819.3px;background:linear-gradient(135deg,#3d6593,#345a86);color:#fff;">&#8364;</div>
<div class="digit" style="left:1878.3px"></div>
<div class="digit" style="left:1926.5px"></div>
<div class="digit" style="left:1975.4px"></div>
<div class="digit" style="left:2023.4px">2</div>
<div class="digit" style="left:2072.5px">9</div>
<div class="digit" style="left:2120.5px">8</div>
<svg width="2229" height="1505"><circle cx="1994.2" cy="860.8" r="194.6" fill="none" stroke="#a4a4a4" stroke-width="20.2"/><path d="M1994.20 666.20 A194.6 194.6 0 0 1 2159.59 758.25" fill="none" stroke="#174d32" stroke-width="20.2"/><circle cx="1994.2" cy="860.8" r="184.5" fill="#dcdcdc"/><path d="M1994.2 860.8 L1994.20 676.30 A184.5 184.5 0 0 1 2086.78 701.21 Z" fill="#3a8660"/><path d="M1994.2 860.8 L2086.78 701.21 A184.5 184.5 0 0 1 2150.77 763.19 Z" fill="#f6c500"/><path d="M1994.2 860.8 L2150.77 763.19 A184.5 184.5 0 0 1 2156.65 773.33 Z" fill="#ef8c1f"/><text x="2000" y="752.5" font-size="33" font-weight="bold" fill="#fff">8%</text><text x="2052.5" y="782.5" font-size="33" font-weight="bold" fill="#000">8%</text><text x="1896.5" y="974.5" font-size="33" font-weight="bold" fill="#000">83%</text></svg>
<div class="hr" style="top:1503px;height:2px;background:#e3e3e3"></div>
</body></html>
